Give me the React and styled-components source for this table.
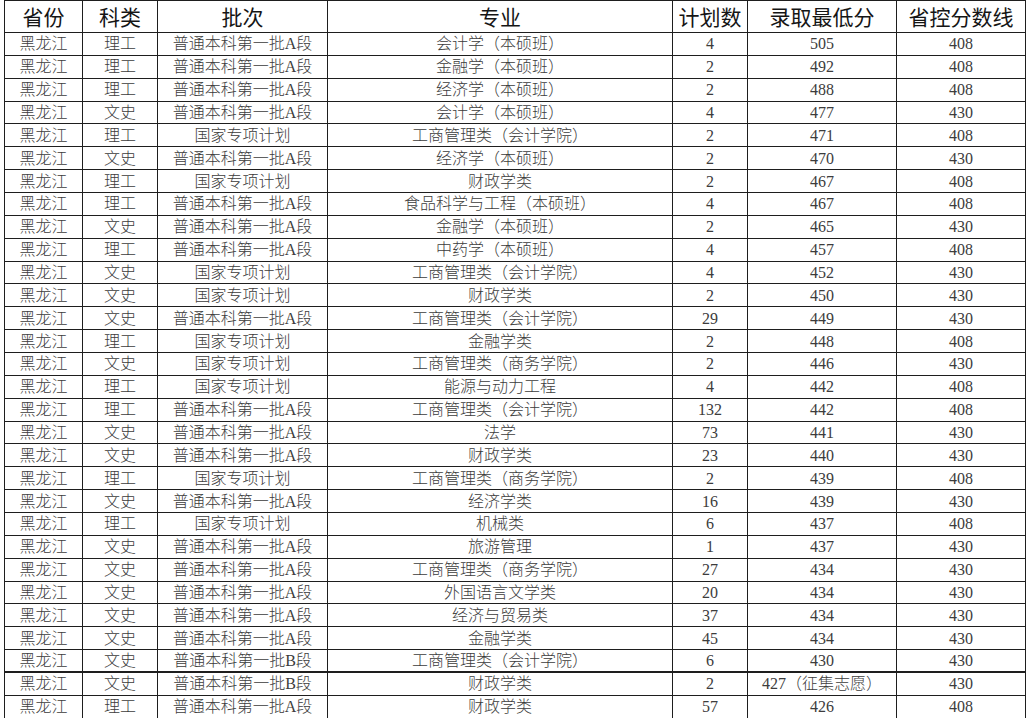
import React from "react";
import styled, {createGlobalStyle} from "styled-components";

const GlobalStyle = createGlobalStyle`
  html, body {
    margin: 0;
    padding: 0;
    background: #ffffff;
  }
`

const COLUMNS = [78, 75, 170, 345, 75, 149, 129];
const HEADERS = ["省份", "科类", "批次", "专业", "计划数", "录取最低分", "省控分数线"];

const ROWS = [
    ["理工", "普通本科第一批A段", "会计学（本硕班）", "4", "505", "408"],
    ["理工", "普通本科第一批A段", "金融学（本硕班）", "2", "492", "408"],
    ["理工", "普通本科第一批A段", "经济学（本硕班）", "2", "488", "408"],
    ["文史", "普通本科第一批A段", "会计学（本硕班）", "4", "477", "430"],
    ["理工", "国家专项计划", "工商管理类（会计学院）", "2", "471", "408"],
    ["文史", "普通本科第一批A段", "经济学（本硕班）", "2", "470", "430"],
    ["理工", "国家专项计划", "财政学类", "2", "467", "408"],
    ["理工", "普通本科第一批A段", "食品科学与工程（本硕班）", "4", "467", "408"],
    ["文史", "普通本科第一批A段", "金融学（本硕班）", "2", "465", "430"],
    ["理工", "普通本科第一批A段", "中药学（本硕班）", "4", "457", "408"],
    ["文史", "国家专项计划", "工商管理类（会计学院）", "4", "452", "430"],
    ["文史", "国家专项计划", "财政学类", "2", "450", "430"],
    ["文史", "普通本科第一批A段", "工商管理类（会计学院）", "29", "449", "430"],
    ["理工", "国家专项计划", "金融学类", "2", "448", "408"],
    ["文史", "国家专项计划", "工商管理类（商务学院）", "2", "446", "430"],
    ["理工", "国家专项计划", "能源与动力工程", "4", "442", "408"],
    ["理工", "普通本科第一批A段", "工商管理类（会计学院）", "132", "442", "408"],
    ["文史", "普通本科第一批A段", "法学", "73", "441", "430"],
    ["文史", "普通本科第一批A段", "财政学类", "23", "440", "430"],
    ["理工", "国家专项计划", "工商管理类（商务学院）", "2", "439", "408"],
    ["文史", "普通本科第一批A段", "经济学类", "16", "439", "430"],
    ["理工", "国家专项计划", "机械类", "6", "437", "408"],
    ["文史", "普通本科第一批A段", "旅游管理", "1", "437", "430"],
    ["文史", "普通本科第一批A段", "工商管理类（商务学院）", "27", "434", "430"],
    ["文史", "普通本科第一批A段", "外国语言文学类", "20", "434", "430"],
    ["文史", "普通本科第一批A段", "经济与贸易类", "37", "434", "430"],
    ["文史", "普通本科第一批A段", "金融学类", "45", "434", "430"],
    ["文史", "普通本科第一批B段", "工商管理类（会计学院）", "6", "430", "430"],
    ["文史", "普通本科第一批B段", "财政学类", "2", "427（征集志愿）", "430"],
    ["理工", "普通本科第一批A段", "财政学类", "57", "426", "408"],
];

const Sheet = styled.div`
  display: grid;
  grid-template-columns: ${COLUMNS.map(w => w + "px").join(" ")};
  grid-template-rows: 32px;
  grid-auto-rows: 22.87px;
  margin-left: 4px;
  width: max-content;
  border-left: 1px solid #1e1e1e;
  border-top: 1px solid #1e1e1e;
`

const Cell = styled.div`
  box-sizing: border-box;
  display: flex;
  align-items: center;
  justify-content: center;
  white-space: nowrap;
  overflow: visible;
  border-right: 1px solid #1e1e1e;
  border-bottom: ${props => props.$thick ? "2px" : "1px"} solid #1e1e1e;
  font-family: ${props => props.$head
          ? `"Noto Sans CJK SC", "Noto Sans", sans-serif`
          : `"Liberation Serif", "Noto Sans CJK SC", serif`};
  font-size: ${props => props.$head ? "21px" : "16px"};
  font-weight: ${props => props.$head ? 400 : 300};
  color: ${props => props.$head ? "#151515" : "#3c3c3c"};
  line-height: 1;
  padding-top: ${props => props.$head ? "0" : "1px"};
`

function App() {
    return (
        <>
            <GlobalStyle/>
            <Sheet>
                {HEADERS.map(h => (
                    <Cell key={h} $head>{h}</Cell>
                ))}
                {ROWS.map((row, i) => (
                    <React.Fragment key={i}>
                        <Cell $thick={i === 27}>黑龙江</Cell>
                        {row.map((value, j) => (
                            <Cell key={j} $thick={i === 27}>{value}</Cell>
                        ))}
                    </React.Fragment>
                ))}
            </Sheet>
        </>
    );
}

export default App;
